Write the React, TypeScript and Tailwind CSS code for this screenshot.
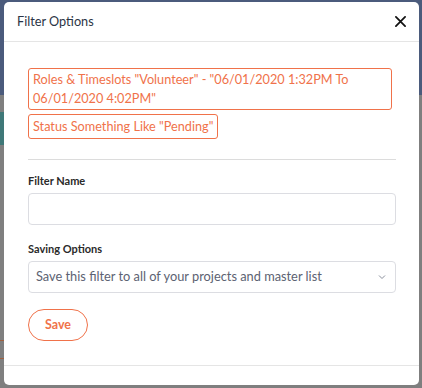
import React from "react";

export default function App() {
  return (
    <div className="relative w-[422px] h-[388px] overflow-hidden bg-[#7f7f7f]" style={{ fontFamily: "Lato, 'Noto Sans', sans-serif" }}>
      {/* backdrop */}
      <div className="absolute left-0 top-0 w-full h-[95px] bg-[#4b5b7c]" />
      <div className="absolute left-0 top-[112px] w-[10px] h-[33px] bg-[#3f7878]" />
      <div className="absolute left-0 top-[340px] w-[10px] h-[1px] bg-[#a0603f]" />
      <div className="absolute left-0 top-[358px] w-[10px] h-[1px] bg-[#a0603f]" />

      <div className="absolute left-[4px] top-[2px] w-[415px] h-[383px] bg-white rounded-[5px] flex flex-col">
        <div className="h-[40px] border-b border-[#e5e5e5] flex items-center justify-between pl-[13px] pr-[12px]">
          <span className="text-[12.7px] text-[#2b3445] pt-[1px]">Filter Options</span>
          <svg width="11" height="11" viewBox="0 0 12 12" className="mr-[1px]">
            <path d="M1 1L11 11M11 1L1 11" stroke="#111" strokeWidth="1.9" strokeLinecap="round" />
          </svg>
        </div>
        <div className="px-[24px] pt-[26px] flex flex-col">
          <div className="flex flex-col items-start gap-[4px]">
            <div className="w-[364px] border border-[#f0724a] rounded-[3px] px-[4px] py-[1px] text-[12.7px] leading-[19px] text-[#f0724a]">
              Roles &amp; Timeslots "Volunteer" - "06/01/2020 1:32PM To 06/01/2020 4:02PM"
            </div>
            <div className="border border-[#f0724a] rounded-[3px] px-[4px] py-[2px] text-[12.7px] leading-[19px] text-[#f0724a]">
              Status Something Like "Pending"
            </div>
          </div>
          <div className="mt-[20px] h-px bg-[#dcdcdc] w-[368px]" />
          <div className="mt-[13px] text-[11px] font-bold text-[#2a2a2a] leading-[16px]">Filter Name</div>
          <div className="mt-[4px] h-[32px] w-[368px] border border-[#dcdde2] rounded-[4px]" />
          <div className="mt-[16px] text-[11px] font-bold text-[#2a2a2a] leading-[16px]">Saving Options</div>
          <div className="mt-[4px] h-[32px] w-[368px] border border-[#dcdde2] rounded-[4px] flex items-center justify-between pl-[7px] pr-[9px]">
            <span className="text-[12.8px] text-[#5c6272]">Save this filter to all of your projects and master list</span>
            <svg width="8" height="6" viewBox="0 0 8 6">
              <path d="M1 1.5L4 4.5L7 1.5" stroke="#8a8f9c" strokeWidth="1" fill="none" />
            </svg>
          </div>
          <div className="mt-[16px]">
            <button className="h-[32px] w-[60px] rounded-full border border-[#f0724a] text-[#f0724a] text-[12.5px] font-bold">Save</button>
          </div>
        </div>
        <div className="mt-auto mb-[19px] h-px bg-[#e5e5e5]" />
      </div>
    </div>
  );
}
